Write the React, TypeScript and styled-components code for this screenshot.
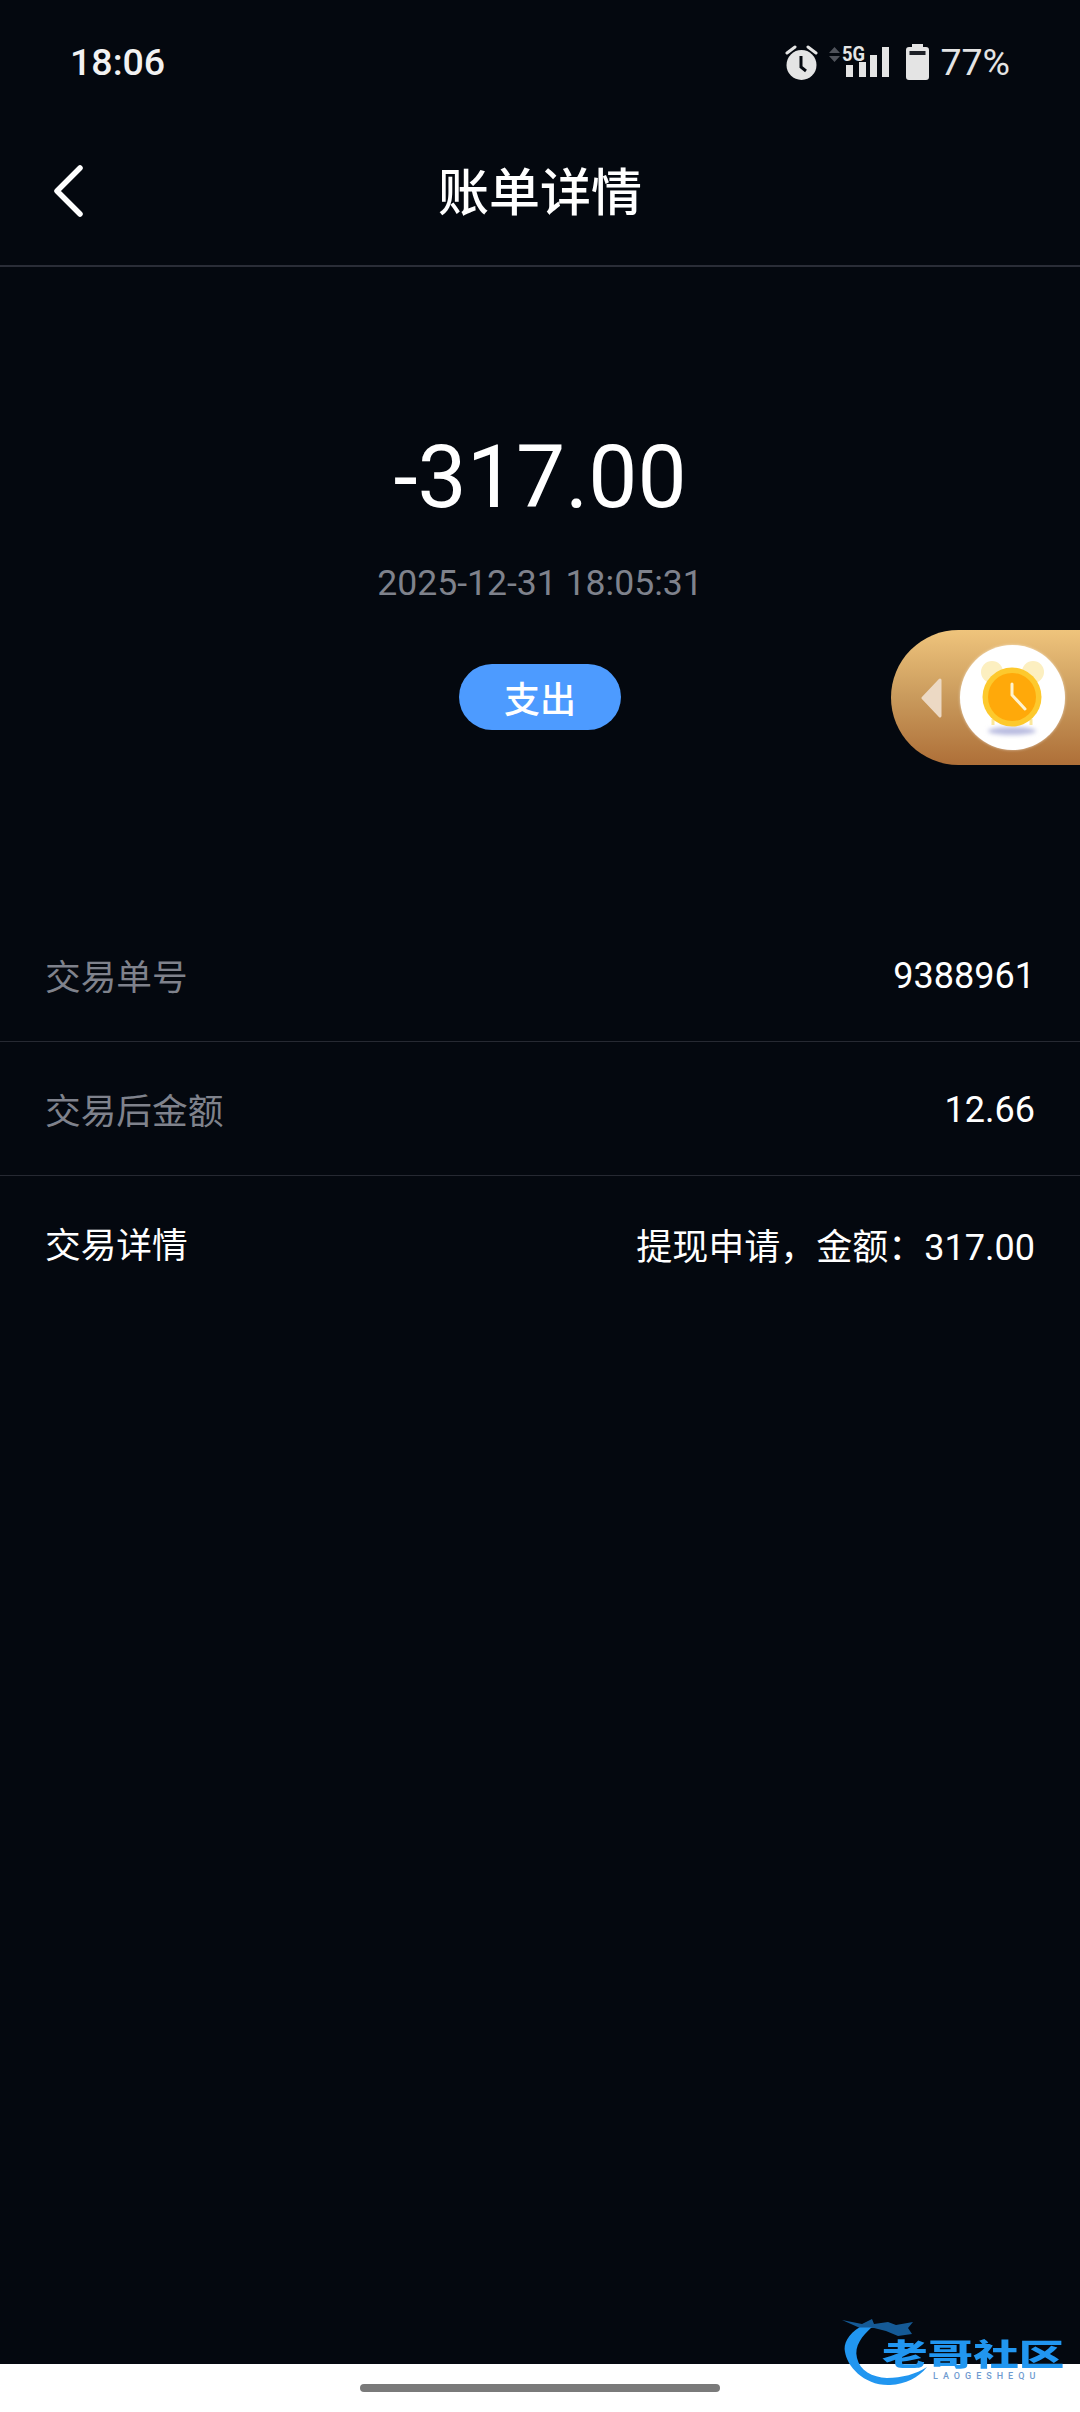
import React from "react";
import styled, { createGlobalStyle } from "styled-components";

const Global = createGlobalStyle`
  html, body { margin: 0; padding: 0; background: #04080f; }
  * { box-sizing: border-box; }
`;

const sans = `Roboto, "Noto Sans CJK SC", sans-serif`;

const Page = styled.div`
  position: relative;
  width: 1080px;
  height: 2412px;
  overflow: hidden;
  display: flex;
  flex-direction: column;
  background: #04080f;
  font-family: ${sans};
  color: #fff;
`;

const StatusBar = styled.div`
  height: 124px;
  padding: 0 70px 0 70px;
  display: flex;
  align-items: center;
  justify-content: space-between;
  font-size: 37.5px;
  font-weight: 500;
  color: #f2f2f2;
`;

const StatusIcons = styled.div`
  display: flex;
  align-items: center;
  color: #e4e4e4;
`;

const SignalIcon = styled.svg`
  margin-left: 11px;
  overflow: visible;
`;

const BatteryIcon = styled.svg`
  margin-left: 17px;
`;

const Percent = styled.span`
  margin-left: 11px;
  font-size: 37.5px;
  font-weight: 400;
  line-height: 38px;
`;

const Header = styled.header`
  position: relative;
  height: 143px;
  display: flex;
  align-items: center;
  justify-content: center;
  border-bottom: 2px solid #2a2d37;
`;

const BackIcon = styled.svg`
  position: absolute;
  left: 50px;
  top: 41px;
`;

const Title = styled.h1`
  margin: 0;
  font-size: 51px;
  font-weight: 500;
  line-height: 1;
  padding-bottom: 2px;
`;

const Summary = styled.section`
  display: flex;
  flex-direction: column;
  align-items: center;
  padding-top: 155px;
`;

const Amount = styled.div`
  font-size: 87.5px;
  line-height: 110px;
`;

const DateText = styled.div`
  margin-top: 30px;
  font-size: 35.6px;
  line-height: 42px;
  color: #7f828c;
`;

const Badge = styled.div`
  margin-top: 60px;
  width: 162px;
  height: 66px;
  border-radius: 33px;
  background: #4d9bff;
  display: flex;
  align-items: center;
  justify-content: center;
  font-size: 36px;
  font-weight: 500;
`;

const Rows = styled.section`
  margin-top: 178px;
  display: flex;
  flex-direction: column;
`;

const Row = styled.div`
  height: 134px;
  padding: 0 45px;
  display: flex;
  align-items: center;
  justify-content: space-between;
  font-size: 36px;
  border-bottom: 1px solid #262932;
  &:last-child { border-bottom-color: transparent; }
`;

const Label = styled.span<{ $bright?: boolean }>`
  font-size: 35.7px;
  color: ${(p) => (p.$bright ? "#ffffff" : "#7f828c")};
`;

const Value = styled.span`
  padding-top: 3px;
  color: #fff;
`;

const Spacer = styled.div`
  flex: 1;
`;

const BottomBar = styled.div`
  height: 48px;
  background: #fff;
  display: flex;
  align-items: center;
  justify-content: center;
`;

const HomeIndicator = styled.div`
  width: 360px;
  height: 8px;
  border-radius: 4px;
  background: #7a7a7a;
`;

const FloatTab = styled.div`
  position: absolute;
  right: 0;
  top: 630px;
  width: 189px;
  height: 135px;
  border-radius: 67.5px 0 0 67.5px;
  background: linear-gradient(180deg, #efc47c 0%, #c99a5c 50%, #ae6f38 100%);
  display: flex;
  align-items: center;
  padding-left: 30px;
  gap: 18px;
`;

const ClockDisc = styled.div`
  width: 105px;
  height: 105px;
  border-radius: 50%;
  background: #fff;
  box-shadow: 0 0 3px rgba(255, 255, 255, 0.6);
`;

const Watermark = styled.div`
  position: absolute;
  left: 838px;
  top: 2316px;
  width: 240px;
  height: 82px;
`;

const MarkTitle = styled.div`
  position: absolute;
  left: 44px;
  top: 24px;
  font-size: 40px;
  line-height: 40px;
  font-weight: 900;
  white-space: nowrap;
  color: #2196f0;
  transform-origin: left top;
  transform: scale(1.14, 0.75);
`;

const MarkSub = styled.div`
  position: absolute;
  left: 95px;
  top: 54px;
  font-size: 9px;
  line-height: 12px;
  letter-spacing: 5px;
  font-weight: 500;
  color: #6f9bd0;
`;

const MarkSvg = styled.svg`
  position: absolute;
  left: 0;
  top: 0;
`;

export default function App() {
  return (
    <Page>
      <Global />
      <StatusBar>
        <span>18:06</span>
        <StatusIcons>
          <svg width="33" height="36" viewBox="0 0 33 36">
            <circle cx="16.5" cy="21" r="15" fill="currentColor" />
            <path d="M16 12v11l5 4" fill="none" stroke="#04080f" strokeWidth="3" />
            <path d="M2 9l8-6M31 9l-8-6" stroke="currentColor" strokeWidth="3" strokeLinecap="round" />
          </svg>
          <SignalIcon width="60" height="36" viewBox="0 0 60 36">
            <path d="M0 9l5.5-6 5.5 6zM0 12l5.5 6 5.5-6z" fill="#50535b" />
            <text x="13" y="17" fontFamily="Roboto, sans-serif" fontWeight="700" fontSize="20" textLength="23" lengthAdjust="spacingAndGlyphs" fill="currentColor">5G</text>
            <rect x="17" y="21" width="7" height="12" fill="currentColor" />
            <rect x="30" y="18" width="7" height="15" fill="currentColor" />
            <rect x="41" y="11" width="7" height="22" fill="currentColor" />
            <rect x="53" y="3" width="7" height="30" fill="currentColor" />
          </SignalIcon>
          <BatteryIcon width="23" height="36" viewBox="0 0 23 36">
            <path d="M6 0h11v3h3a3 3 0 0 1 3 3v27a3 3 0 0 1-3 3H3a3 3 0 0 1-3-3V6a3 3 0 0 1 3-3h3z" fill="currentColor" />
            <rect x="3.5" y="7" width="16" height="4" fill="#04080f" opacity="0.9" />
          </BatteryIcon>
          <Percent>77%</Percent>
        </StatusIcons>
      </StatusBar>
      <Header>
        <BackIcon width="40" height="52" viewBox="0 0 40 52">
          <path d="M30 3L7 26l23 23" fill="none" stroke="#fff" strokeWidth="5.5" strokeLinecap="round" strokeLinejoin="round" />
        </BackIcon>
        <Title>账单详情</Title>
      </Header>
      <Summary>
        <Amount>-317.00</Amount>
        <DateText>2025-12-31 18:05:31</DateText>
        <Badge>支出</Badge>
      </Summary>
      <Rows>
        <Row>
          <Label>交易单号</Label>
          <Value>9388961</Value>
        </Row>
        <Row>
          <Label>交易后金额</Label>
          <Value>12.66</Value>
        </Row>
        <Row>
          <Label $bright>交易详情</Label>
          <Value>提现申请，金额：317.00</Value>
        </Row>
      </Rows>
      <Spacer />
      <BottomBar>
        <HomeIndicator />
      </BottomBar>
      <FloatTab>
        <svg width="21" height="40" viewBox="0 0 21 40">
          <path d="M19 2L2 20l17 18z" fill="#ecd9c4" stroke="#ecd9c4" strokeWidth="3" strokeLinejoin="round" />
        </svg>
        <ClockDisc>
          <svg width="105" height="105" viewBox="0 0 105 105">
            <defs>
              <filter id="soft" x="-30%" y="-100%" width="160%" height="300%">
                <feGaussianBlur stdDeviation="2" />
              </filter>
            </defs>
            <ellipse cx="52" cy="86" rx="24" ry="4" fill="#b9bce0" filter="url(#soft)" />
            <circle cx="32" cy="27" r="11" fill="#fcefc0" />
            <circle cx="73" cy="27" r="11" fill="#fcefc0" />
            <path d="M33 74v6M71 74v6" stroke="#fbe79a" strokeWidth="3" />
            <circle cx="52" cy="52" r="29.5" fill="#fdc92d" />
            <circle cx="52" cy="52" r="24" fill="#ffa90a" />
            <path d="M52 39v11l13 14" fill="none" stroke="#fff3cf" strokeWidth="3" strokeLinecap="round" />
          </svg>
        </ClockDisc>
      </FloatTab>
      <Watermark>
        <MarkSvg width="100" height="82" viewBox="0 0 100 82">
          <path d="M22 11C10 18 5 28 7 36C9 50 26 70 52 69C68 68 80 62 89 51C78 58 64 62 49 62C34 61 22 55 19 42C16 30 24 20 34 11Z" fill="#2196f0" />
          <path d="M4 4L24 8L34 3L36 8L50 6L58 9L75 6L70 12L74 18L60 20L48 15L36 12L22 12Z" fill="#1a6fb8" opacity="0.8" />
        </MarkSvg>
        <MarkTitle>老哥社区</MarkTitle>
        <MarkSub>LAOGESHEQU</MarkSub>
      </Watermark>
    </Page>
  );
}
